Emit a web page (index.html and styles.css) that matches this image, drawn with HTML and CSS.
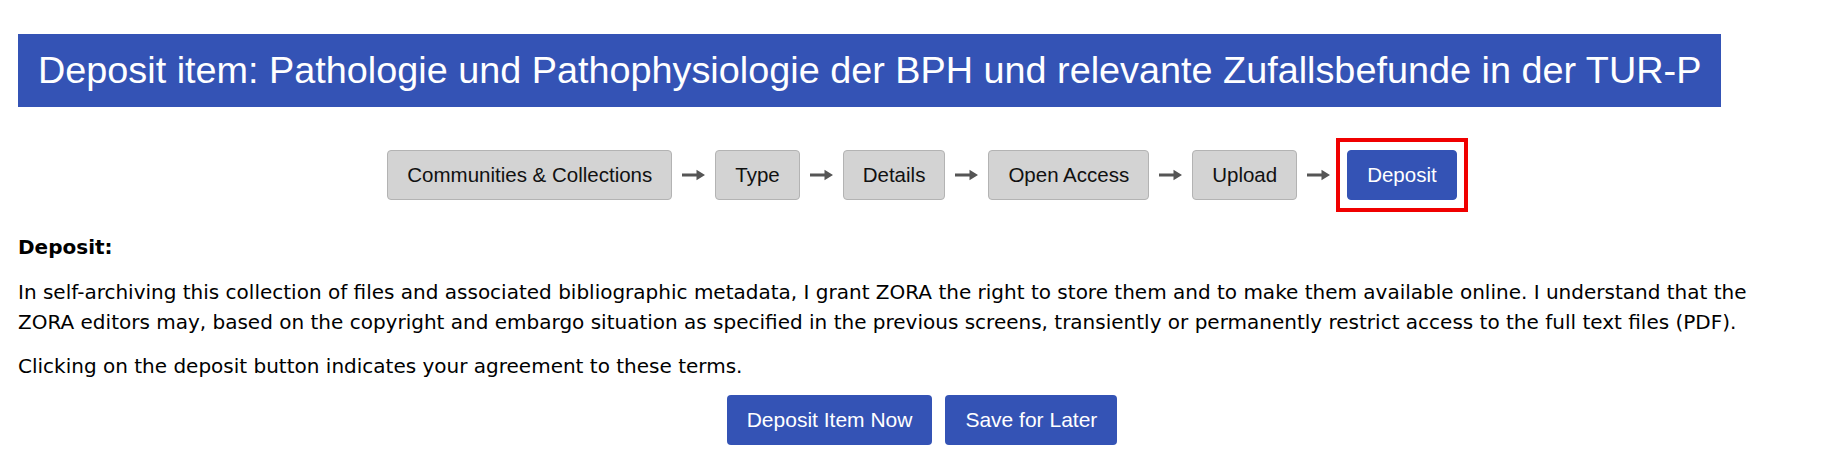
FILE: index.html
```html
<!DOCTYPE html>
<html lang="en">
<head>
<meta charset="utf-8">
<title>Deposit item</title>
<link rel="stylesheet" href="styles.css">
</head>
<body>
<div class="page">
  <h1 class="title">Deposit item: Pathologie und Pathophysiologie der BPH und relevante Zufallsbefunde in der TUR-P</h1>

  <nav class="steps">
    <span class="step">Communities &amp; Collections</span>
    <svg class="arrow" viewBox="0 0 23 12" width="23" height="12"><path d="M0 4.5h14.5V0.8L23 6l-8.5 5.2V7.5H0z"/></svg>
    <span class="step">Type</span>
    <svg class="arrow" viewBox="0 0 23 12" width="23" height="12"><path d="M0 4.5h14.5V0.8L23 6l-8.5 5.2V7.5H0z"/></svg>
    <span class="step">Details</span>
    <svg class="arrow" viewBox="0 0 23 12" width="23" height="12"><path d="M0 4.5h14.5V0.8L23 6l-8.5 5.2V7.5H0z"/></svg>
    <span class="step">Open Access</span>
    <svg class="arrow" viewBox="0 0 23 12" width="23" height="12"><path d="M0 4.5h14.5V0.8L23 6l-8.5 5.2V7.5H0z"/></svg>
    <span class="step">Upload</span>
    <svg class="arrow" viewBox="0 0 23 12" width="23" height="12"><path d="M0 4.5h14.5V0.8L23 6l-8.5 5.2V7.5H0z"/></svg>
    <span class="step step-current">Deposit</span>
  </nav>

  <section class="terms">
    <h2 class="terms-heading">Deposit:</h2>
    <p class="terms-text">In self-archiving this collection of files and associated bibliographic metadata, I grant ZORA the right to store them and to make them available online. I understand that the ZORA editors may, based on the copyright and embargo situation as specified in the previous screens, transiently or permanently restrict access to the full text files (PDF).</p>
    <p class="terms-text">Clicking on the deposit button indicates your agreement to these terms.</p>
  </section>

  <div class="actions">
    <button class="btn" type="button">Deposit Item Now</button>
    <button class="btn" type="button">Save for Later</button>
  </div>
</div>
</body>
</html>
```
FILE: styles.css
```css
html, body {
  margin: 0;
  padding: 0;
  background: #ffffff;
}

.page {
  padding: 34px 18px 0 18px;
}

.title {
  display: inline-block;
  margin: 0;
  padding: 15px 20px;
  background: #3453b5;
  color: #ffffff;
  font-family: "Liberation Sans", Arial, sans-serif;
  font-size: 37.8px;
  line-height: 43px;
  font-weight: normal;
}

.steps {
  display: flex;
  justify-content: center;
  align-items: center;
  margin-top: 43px;
}

.step {
  background: #d3d3d3;
  border: 1px solid #b3b3b3;
  border-radius: 4px;
  padding: 12px 19px;
  font-family: "Liberation Sans", Arial, sans-serif;
  font-size: 20.5px;
  line-height: 24px;
  color: #111111;
}

.step-current {
  position: relative;
  margin-left: 7px;
  background: #3453b5;
  border-color: #3453b5;
  color: #ffffff;
}

.step-current::after {
  content: "";
  position: absolute;
  top: -13px;
  bottom: -13px;
  left: -12px;
  right: -12px;
  border: 4px solid #f00000;
}

.arrow {
  margin: 0 10px;
  fill: #555555;
}

.terms {
  margin-top: 32px;
  padding-right: 50px;
  font-family: "DejaVu Sans", Verdana, sans-serif;
  font-size: 20px;
  line-height: 30px;
  color: #000000;
}

.terms-heading {
  margin: 0 0 15px 0;
  font-size: 20px;
  line-height: 30px;
  font-weight: bold;
}

.terms-text {
  margin: 0 0 14px 0;
}

.actions {
  display: flex;
  justify-content: center;
  gap: 13px;
  margin-top: 14px;
}

.btn {
  background: #3453b5;
  color: #ffffff;
  border: none;
  border-radius: 4px;
  padding: 13px 20px;
  font-family: "Liberation Sans", Arial, sans-serif;
  font-size: 21px;
  line-height: 24px;
  cursor: pointer;
}
```
